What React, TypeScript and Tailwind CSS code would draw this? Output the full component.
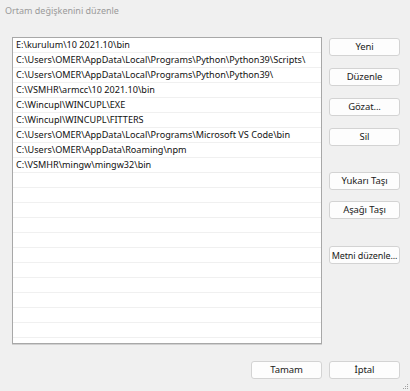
import React from "react";

const paths = [
  "E:\\kurulum\\10 2021.10\\bin",
  "C:\\Users\\OMER\\AppData\\Local\\Programs\\Python\\Python39\\Scripts\\",
  "C:\\Users\\OMER\\AppData\\Local\\Programs\\Python\\Python39\\",
  "C:\\VSMHR\\armcc\\10 2021.10\\bin",
  "C:\\Wincupl\\WINCUPL\\EXE",
  "C:\\Wincupl\\WINCUPL\\FITTERS",
  "C:\\Users\\OMER\\AppData\\Local\\Programs\\Microsoft VS Code\\bin",
  "C:\\Users\\OMER\\AppData\\Roaming\\npm",
  "C:\\VSMHR\\mingw\\mingw32\\bin",
];

const rows = [...paths, ...Array(11).fill("")];

function Btn({ label, className = "" }: { label: string; className?: string }) {
  return (
    <div
      className={`h-[18px] w-[71px] flex items-center justify-center bg-[#fdfdfd] border border-[#d3d3d3] rounded-[3px] text-[9.5px] text-[#1a1a1a] leading-none whitespace-nowrap tracking-[-0.1px] ${className}`}
    >
      {label}
    </div>
  );
}

export default function App() {
  return (
    <div
      className="relative w-[410px] h-[391px] bg-[#f0f0f0] flex flex-col overflow-hidden"
      style={{ fontFamily: '"Noto Sans", "Open Sans", sans-serif' }}
    >
      <div className="h-[37px] pl-[5px] pt-[4px] text-[9px] leading-[14px] text-[#9a9a9a]">
        Ortam değişkenini düzenle
      </div>
      <div className="flex pl-[12px]">
        <div className="w-[310px] h-[307px] bg-white border border-[#a8a8a8] shadow-[0_1px_0_#d0d0d0] overflow-hidden">
          {rows.map((r, i) => (
            <div
              key={i}
              className="h-[15px] border-b border-[#f0f0f0] pl-[3px] text-[9.1px] leading-[14px] text-[#111] whitespace-nowrap"
            >
              {r}
            </div>
          ))}
        </div>
        <div className="ml-[7px] flex flex-col">
          <Btn label="Yeni" className="mt-[1px]" />
          <Btn label="Düzenle" className="mt-[12px]" />
          <Btn label="Gözat..." className="mt-[12px]" />
          <Btn label="Sil" className="mt-[12px]" />
          <Btn label="Yukarı Taşı" className="mt-[26px]" />
          <Btn label="Aşağı Taşı" className="mt-[11px]" />
          <Btn label="Metni düzenle..." className="mt-[27px] text-[9px]" />
        </div>
      </div>
      <div className="flex justify-end pr-[10px] mt-[17px] gap-[7px]">
        <Btn label="Tamam" />
        <Btn label="İptal" />
      </div>
      <svg className="absolute right-[1px] bottom-[1px]" width="6" height="6" viewBox="0 0 6 6">
        <rect x="4" y="0" width="1" height="1" fill="#a0a0a0" />
        <rect x="2" y="2" width="1" height="1" fill="#a0a0a0" />
        <rect x="4" y="2" width="1" height="1" fill="#a0a0a0" />
        <rect x="0" y="4" width="1" height="1" fill="#a0a0a0" />
        <rect x="2" y="4" width="1" height="1" fill="#a0a0a0" />
        <rect x="4" y="4" width="1" height="1" fill="#a0a0a0" />
      </svg>
    </div>
  );
}
